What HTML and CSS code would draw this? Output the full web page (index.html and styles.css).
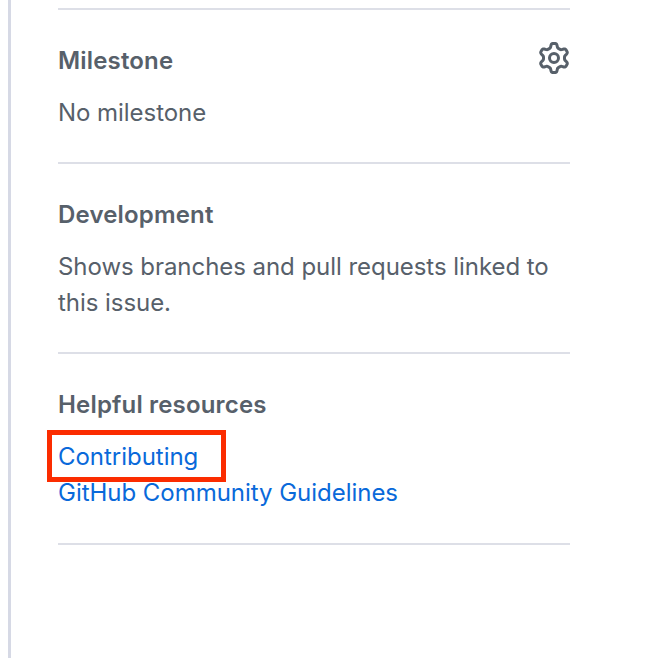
FILE: index.html
```html
<!DOCTYPE html>
<html lang="en">
<head>
  <meta charset="UTF-8">
  <title>Issue sidebar</title>
  <link rel="stylesheet" href="styles.css">
</head>
<body>
  <div class="sidebar">
    <!-- Milestone -->
    <div class="section first">
      <div class="section-head">
        <h3>Milestone</h3>
        <svg class="gear" viewBox="0 0 16 16" width="32" height="32" aria-hidden="true">
          <path d="M8 0a8.2 8.2 0 0 1 .701.031C9.444.095 9.99.645 10.16 1.29l.288 1.107c.018.066.079.158.212.224.231.114.454.243.668.386.123.082.233.09.299.071l1.103-.303c.644-.176 1.392.021 1.82.63.27.385.506.792.704 1.218.315.675.111 1.422-.364 1.891l-.814.806c-.049.048-.098.147-.088.294.016.257.016.515 0 .772-.01.147.038.246.088.294l.814.806c.475.469.679 1.216.364 1.891a7.977 7.977 0 0 1-.704 1.217c-.428.61-1.176.807-1.82.63l-1.102-.302c-.067-.019-.177-.011-.3.071a5.909 5.909 0 0 1-.668.386c-.133.066-.194.158-.211.224l-.29 1.106c-.168.646-.715 1.196-1.458 1.26a8.006 8.006 0 0 1-1.402 0c-.743-.064-1.289-.614-1.458-1.26l-.289-1.106c-.018-.066-.079-.158-.212-.224a5.738 5.738 0 0 1-.668-.386c-.123-.082-.233-.09-.299-.071l-1.103.303c-.644.176-1.392-.021-1.82-.63a8.12 8.12 0 0 1-.704-1.218c-.315-.675-.111-1.422.363-1.891l.815-.806c.05-.048.098-.147.088-.294a6.214 6.214 0 0 1 0-.772c.01-.147-.038-.246-.088-.294l-.815-.806C.635 6.045.431 5.298.746 4.623a7.92 7.92 0 0 1 .704-1.217c.428-.61 1.176-.807 1.82-.63l1.102.302c.067.019.177.011.3-.071.214-.143.437-.272.668-.386.133-.066.194-.158.211-.224l.29-1.106C6.009.645 6.556.095 7.299.03 7.53.01 7.764 0 8 0Zm-.571 1.525c-.036.003-.108.036-.137.146l-.289 1.105c-.147.561-.549.967-.998 1.189-.173.086-.34.183-.5.29-.417.278-.97.423-1.529.27l-1.103-.303c-.109-.03-.175.016-.195.045-.22.312-.412.644-.573.99-.014.031-.021.11.059.19l.815.806c.411.406.562.957.53 1.456a4.709 4.709 0 0 0 0 .582c.032.499-.119 1.05-.53 1.456l-.815.806c-.081.08-.073.159-.059.19.162.346.353.677.573.989.02.03.085.076.195.046l1.102-.303c.56-.153 1.113-.008 1.53.27.161.107.328.204.501.29.447.222.85.629.997 1.189l.289 1.105c.029.109.101.143.137.146a6.6 6.6 0 0 0 1.142 0c.036-.003.108-.036.137-.146l.289-1.105c.147-.561.549-.967.998-1.189.173-.086.34-.183.5-.29.417-.278.97-.423 1.529-.27l1.103.303c.109.029.175-.016.195-.045.22-.313.411-.644.573-.99.014-.031.021-.11-.059-.19l-.815-.806c-.411-.406-.562-.957-.53-1.456a4.709 4.709 0 0 0 0-.582c-.032-.499.119-1.05.53-1.456l.815-.806c.081-.08.073-.159.059-.19a6.464 6.464 0 0 0-.573-.989c-.02-.03-.085-.076-.195-.046l-1.102.303c-.56.153-1.113.008-1.53-.27a4.44 4.44 0 0 0-.501-.29c-.447-.222-.85-.629-.997-1.189l-.289-1.105c-.029-.11-.101-.143-.137-.146a6.6 6.6 0 0 0-1.142 0ZM11 8a3 3 0 1 1-6 0 3 3 0 0 1 6 0ZM9.5 8a1.5 1.5 0 1 0-3.001.001A1.5 1.5 0 0 0 9.5 8Z"></path>
        </svg>
      </div>
      <p>No milestone</p>
    </div>

    <!-- Development -->
    <div class="section">
      <h3>Development</h3>
      <p>Shows branches and pull requests linked to this issue.</p>
    </div>

    <!-- Helpful resources -->
    <div class="section last">
      <h3>Helpful resources</h3>
      <div class="links">
        <a href="#" class="marked">Contributing</a>
        <a href="#">GitHub Community Guidelines</a>
      </div>
    </div>
  </div>
</body>
</html>
```

FILE: styles.css
```css
body {
  margin: 0;
  background-color: white;
  font-family: Inter, "Liberation Sans", sans-serif;
  height: 658px;
  overflow: hidden;
}

.sidebar {
  margin-left: 8px;
  width: 512px;
  height: 650px;
  padding: 8px 0 0 47px;
  border-left: 3px solid #d6d9e5;
}

.section {
  border-bottom: 2px solid #dddfe7;
  padding: 33px 0 31px;
}

.section.first {
  border-top: 2px solid #dddfe7;
}

.section.last {
  padding-bottom: 32px;
}

.section-head {
  display: flex;
  justify-content: space-between;
  align-items: flex-start;
  height: 36px;
}

h3 {
  margin: 0;
  font-size: 24px;
  line-height: 36px;
  font-weight: 600;
  letter-spacing: 0.17px;
  color: #57606a;
}

p {
  margin: 16px 0 0;
  font-size: 24px;
  line-height: 36px;
  letter-spacing: -0.05px;
  color: #57606a;
}

.gear {
  fill: #57606a;
  margin-top: -1px;
}

.links {
  margin-top: 16px;
}

.links a {
  display: block;
  font-size: 24px;
  line-height: 36px;
  letter-spacing: -0.03px;
  color: #0969da;
  text-decoration: none;
  position: relative;
}

/* red annotation box on top of the link */
.marked::after {
  content: "";
  position: absolute;
  left: -11px;
  top: -9px;
  width: 179px;
  height: 52px;
  border: 5px solid #fb2c00;
  box-sizing: border-box;
}
```
